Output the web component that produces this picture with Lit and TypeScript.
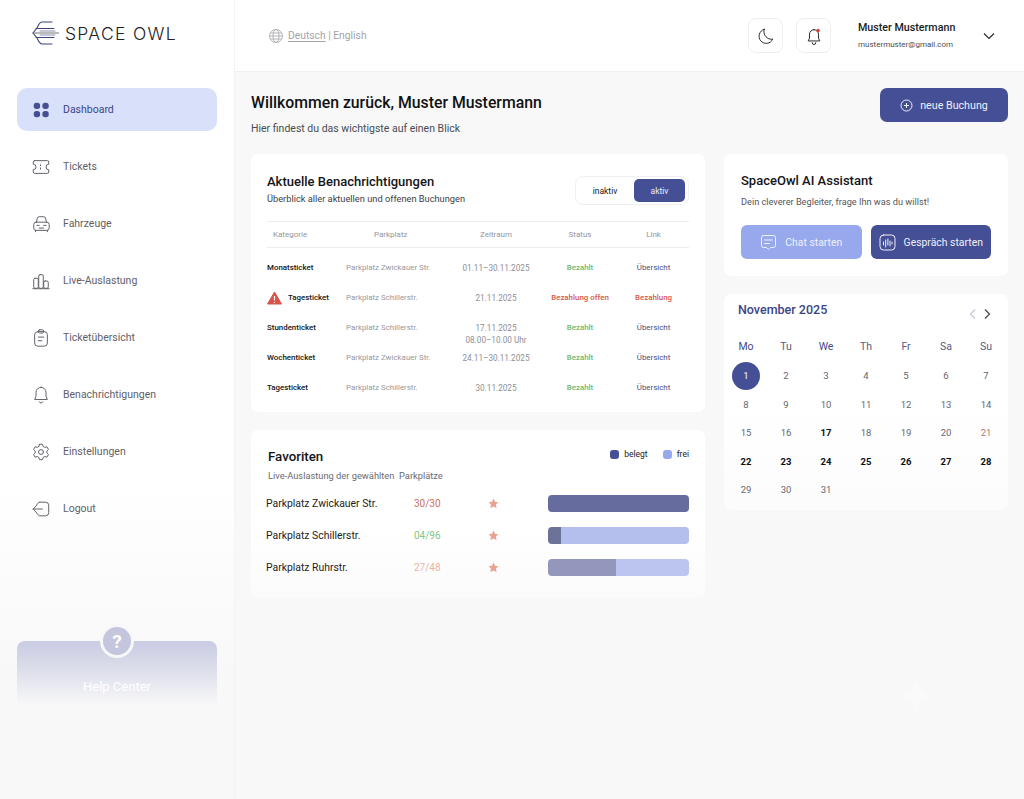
import { LitElement, html, css, svg } from "lit";
import { customElement } from "lit/decorators.js";

const navIcons: Record<string, unknown> = {
  dash: svg`<rect x="2" y="3" width="7" height="7" rx="3" fill="#454f95" stroke="none"/><rect x="11.500" y="3" width="7" height="7" rx="3" fill="#454f95" stroke="none"/><rect x="2" y="12" width="7" height="7" rx="3" fill="#454f95" stroke="none"/><rect x="11.500" y="12" width="7" height="7" rx="3" fill="#454f95" stroke="none"/>`,
  ticket: svg`<path d="M3 4h14a1.500 1.500 0 0 1 1.500 1.500V8a3 3 0 0 0 0 6v2.500A1.500 1.500 0 0 1 17 18H3a1.500 1.500 0 0 1-1.500-1.500V14a3 3 0 0 0 0-6V5.500A1.500 1.500 0 0 1 3 4z"/><path d="M9.500 8.500v1M9.500 12v1.500"/>`,
  car: svg`<path d="M5 9l1-4.500A2 2 0 0 1 8 3h5a2 2 0 0 1 2 1.500L16 9"/><rect x="2" y="9" width="17" height="9" rx="2.500"/><path d="M5.500 12.500h2.500M13 12.500h2.500M8 15.500h5M4 18v1.500M17 18v1.500"/>`,
  chart: svg`<rect x="2" y="8" width="5" height="11" rx="1.500"/><rect x="7.500" y="4" width="5" height="15" rx="1.500"/><rect x="13" y="11" width="5" height="8" rx="1.500"/><path d="M1 19.500h18"/>`,
  clip: svg`<rect x="3" y="4" width="14" height="16" rx="3.500"/><rect x="7" y="2" width="6" height="3.500" rx="1.500"/><path d="M7 10h6M7 14h4"/>`,
  bell: svg`<path d="M10 2.500a5.500 5.500 0 0 0-5.500 5.500v4.500L3 16h14l-1.500-3.500V8A5.500 5.500 0 0 0 10 2.500z"/><path d="M8 18.500a2.200 2.200 0 0 0 4 0"/>`,
  gear: svg`<path d="M8.300 2.500h3.400l.6 2.400 1.800 1 2.400-.7 1.700 3-1.800 1.700v2.100l1.800 1.700-1.700 3-2.400-.7-1.800 1-.6 2.400H8.300l-.6-2.400-1.800-1-2.400.7-1.700-3 1.800-1.700V9.900L1.800 8.200l1.700-3 2.400.7 1.800-1z"/><circle cx="10" cy="11" r="2.700"/>`,
  logout: svg`<path d="M8 3.500h7a3.500 3.500 0 0 1 3.500 3.500v8a3.500 3.500 0 0 1-3.500 3.500H8L5.500 16M5.500 6L8 3.500"/><path d="M1.500 11h10M1.500 11l4-4.500M1.500 11l4 4.500"/>`,
};

const nav = [
  ["dash", "Dashboard"],
  ["ticket", "Tickets"],
  ["car", "Fahrzeuge"],
  ["chart", "Live-Auslastung"],
  ["clip", "Ticketübersicht"],
  ["bell", "Benachrichtigungen"],
  ["gear", "Einstellungen"],
  ["logout", "Logout"],
];

const rows = [
  { k: "Monatsticket", p: "Parkplatz Zwickauer Str.", z: ["01.11–30.11.2025"], s: "Bezahlt", l: "Übersicht" },
  { k: "Tagesticket", p: "Parkplatz Schillerstr.", z: ["21.11.2025"], s: "Bezahlung offen", l: "Bezahlung", warn: true },
  { k: "Stundenticket", p: "Parkplatz Schillerstr.", z: ["17.11.2025", "08.00–10.00 Uhr"], s: "Bezahlt", l: "Übersicht" },
  { k: "Wochenticket", p: "Parkplatz Zwickauer Str.", z: ["24.11–30.11.2025"], s: "Bezahlt", l: "Übersicht" },
  { k: "Tagesticket", p: "Parkplatz Schillerstr.", z: ["30.11.2025"], s: "Bezahlt", l: "Übersicht" },
];

const favs = [
  { n: "Parkplatz Zwickauer Str.", c: "30/30", cls: "red", used: 100, a: "#666c9e", b: "#666c9e" },
  { n: "Parkplatz Schillerstr.", c: "04/96", cls: "green", used: 9, a: "#6d7299", b: "#b5bfee" },
  { n: "Parkplatz Ruhrstr.", c: "27/48", cls: "orange", used: 48, a: "#9297bb", b: "#bcc5ef" },
];

const boldDays = new Set([17, 22, 23, 24, 25, 26, 27, 28]);

@customElement("app-root")
export class AppRoot extends LitElement {
  static styles = css`
    :host {
      display: block;
      width: 1024px;
      height: 799px;
      overflow: hidden;
      font-family: "Roboto", "Liberation Sans", sans-serif;
      color: #111;
    }
    * { box-sizing: border-box; }
    .page {
      position: relative;
      display: grid;
      grid-template-columns: 235px 1fr;
      height: 799px;
      background: #f8f8f9;
    }
    .side {
      display: flex;
      flex-direction: column;
      padding: 0 17px;
      border-right: 1px solid #f3f3f5;
      background: linear-gradient(#ffffff 0, #ffffff 480px, #f8f8f9 680px);
    }
    .logo {
      display: flex;
      align-items: center;
      gap: 6px;
      height: 30px;
      margin: 18px 0 40px 15px;
    }
    .logo span {
      font-family: "Inter", sans-serif;
      font-weight: 300;
      font-size: 17.500px;
      letter-spacing: 1.300px;
      color: #222;
      white-space: nowrap;
    }
    .nav { display: flex; flex-direction: column; gap: 14px; }
    .item {
      display: flex;
      align-items: center;
      gap: 12px;
      height: 43px;
      padding-left: 14px;
      border-radius: 10px;
      font-size: 10.500px;
      color: #5f6067;
    }
    .item svg {
      width: 20px;
      height: 20px;
      fill: none;
      stroke: #63646b;
      stroke-width: 1.100;
      stroke-linecap: round;
      stroke-linejoin: round;
      flex: none;
    }
    .item.on { background: #d9e1fa; color: #3b4488; }
    .help {
      position: relative;
      margin-top: 111px;
      height: 64px;
      border-radius: 8px 8px 0 0;
      background: linear-gradient(#c9cce2 0, #dcdeea 45%, #f8f8f9 100%);
      display: flex;
      justify-content: center;
      align-items: flex-end;
      padding-bottom: 11px;
      color: #fff;
      font-size: 13px;
    }
    .qm {
      position: absolute;
      left: 83px;
      top: -17px;
      width: 34px;
      height: 34px;
      border-radius: 50%;
      background: #c3c6dd;
      border: 3px solid #f8f8fa;
      display: flex;
      align-items: center;
      justify-content: center;
      font-size: 19px;
      font-weight: 700;
      color: #fff;
    }
    .main { display: flex; flex-direction: column; min-width: 0; }
    .top {
      display: flex;
      align-items: center;
      height: 72px;
      background: #fff;
      border-bottom: 1px solid #f1f1f3;
      padding: 0 28px 0 33px;
    }
    .lang { display: flex; align-items: center; gap: 4px; font-size: 10.300px; color: #a3a4aa; flex: 1; }
    .lang svg { width: 16px; height: 16px; fill: none; stroke: #b2b3b9; stroke-width: 1; }
    .lang u { text-underline-offset: 2px; }
    .tool {
      width: 35px;
      height: 35px;
      border: 1px solid #efeff2;
      border-radius: 8px;
      display: flex;
      align-items: center;
      justify-content: center;
      margin-right: 13px;
      background: #fff;
    }
    .tool svg { width: 18px; height: 18px; fill: none; stroke: #2a2a2e; stroke-width: 1.100; stroke-linecap: round; stroke-linejoin: round; }
    .user { margin-left: 14px; width: 124px; }
    .user b { display: block; font-weight: 500; font-size: 10.700px; line-height: 15px; color: #1a1a1d; }
    .user small { display: block; font-size: 8px; line-height: 12px; margin-top: 4px; color: #4c4d52; }
    .chev { width: 14px; height: 14px; fill: none; stroke: #2a2a2e; stroke-width: 1.200; }
    .content { padding: 16px 16px 0; display: flex; flex-direction: column; }
    .head { display: flex; justify-content: space-between; align-items: flex-start; height: 66px; }
    h1 { margin: 0; font-size: 15.800px; font-weight: 500; line-height: 29px; color: #111; }
    .head p { margin: 4px 0 0; font-size: 10.500px; line-height: 16px; color: #4a4b50; }
    .new {
      width: 128px;
      height: 34px;
      border-radius: 7px;
      background: #454f95;
      color: #eef0fa;
      font-size: 10.700px;
      display: flex;
      align-items: center;
      justify-content: center;
      gap: 7px;
    }
    .new svg { width: 13px; height: 13px; fill: none; stroke: #eef0fa; stroke-width: 1; }
    .cols { display: grid; grid-template-columns: 454px 284px; gap: 19px; }
    .col { display: flex; flex-direction: column; gap: 18px; }
    .card { background: #fff; border-radius: 7px; }
    .notif { height: 258px; padding: 18px 16px 0; }
    .nh { display: flex; justify-content: space-between; align-items: flex-start; height: 49px; }
    h2 { margin: 0; font-size: 13px; font-weight: 500; line-height: 20px; color: #141416; }
    .sub { margin: 0; font-size: 9.250px; line-height: 13px; color: #3d3e43; }
    .toggle {
      width: 114px;
      height: 29px;
      margin-top: 4px;
      border: 1px solid #eeeff3;
      border-radius: 8px;
      padding: 2px 2px 2px 0;
      display: grid;
      grid-template-columns: 58px 51px;
      font-size: 8.500px;
      color: #222;
    }
    .toggle span { display: flex; align-items: center; justify-content: center; border-radius: 5px; }
    .toggle .act { background: #454f95; color: #e9ebf8; }
    .tr { display: grid; grid-template-columns: 79px 104px 92px 76px 71px; }
    .th {
      height: 27px;
      align-items: center;
      border-top: 1px solid #ececef;
      border-bottom: 1px solid #ececef;
      font-size: 8px;
      color: #94959b;
      margin-bottom: 5px;
    }
    .th span:nth-child(1) { padding-left: 6px; }
    .th span:nth-child(2) { padding-left: 28px; }
    .c { text-align: center; }
    .td { height: 30px; font-size: 7.900px; line-height: 12px; padding-top: 9px; }
    .td .k { font-weight: 500; color: #151517; white-space: nowrap; display: flex; align-items: center; align-self: start; height: 12px; }
    .td .k svg { width: 15px; height: 14px; margin-right: 6px; flex: none; margin-top: -1px; }
    .td .p { color: #97989e; white-space: nowrap; }
    .td .z { color: #8f9096; white-space: nowrap; font-size: 8.200px; }
    .ok { color: #6fb86d; font-weight: 500; }
    .bad { color: #d8584b; font-weight: 500; white-space: nowrap; }
    .lk { color: #494d78; }
    .fav { height: 168px; padding: 17px 16px 0 15px; background: linear-gradient(#fff 0, #fff 60%, #fbfbfc 100%); }
    .fh { display: flex; justify-content: space-between; height: 40px; }
    .fav h2 { padding-left: 2px; font-size: 13.300px; }
    .fav .sub { padding-left: 2px; color: #6a6b71; font-size: 9.300px; margin-top: 2px; }
    .legend { display: flex; gap: 15px; font-size: 8.500px; color: #222; height: 14px; margin-top: 0; align-items: center; }
    .legend span { display: flex; align-items: center; gap: 5px; }
    .legend i { width: 9px; height: 9px; border-radius: 3px; display: block; }
    .frow {
      display: grid;
      grid-template-columns: 148px 66px 68px 141px;
      align-items: center;
      height: 32px;
      font-size: 10.400px;
      color: #1d1d20;
    }
    .frow .cnt { font-size: 10px; }
    .red { color: #c9735f; }
    .green { color: #84c47f; }
    .orange { color: #edb49f; }
    .frow svg { width: 11px; height: 11px; fill: #e9a392; margin-left: 8px; }
    .bar { display: flex; height: 17px; border-radius: 4px; overflow: hidden; width: 141px; }
    .ai { height: 122px; padding: 17px 17px 0; }
    .ai h2 { font-size: 13px; }
    .ai .sub { margin-top: 4px; color: #55565b; font-size: 9.200px; }
    .ai .btns { display: flex; gap: 9px; margin-top: 17px; }
    .btn {
      width: 121px;
      height: 34px;
      border-radius: 6px;
      display: flex;
      align-items: center;
      justify-content: center;
      gap: 8px;
      font-size: 10.400px;
      color: #eef0fb;
    }
    .btn svg { width: 17px; height: 17px; fill: none; stroke: #eef0fb; stroke-width: 1; stroke-linecap: round; stroke-linejoin: round; flex: none; }
    .b1 { background: #97a8ed; }
    .b2 { background: #454f95; }
    .cal { height: 216px; padding: 7px 2px 0; background: linear-gradient(#fff 0, #fff 50%, #fcfcfd 100%); }
    .ch { display: flex; justify-content: space-between; align-items: flex-start; height: 31px; padding: 0 14px 0 12px; }
    .ch b { font-weight: 500; font-size: 12.500px; line-height: 18px; color: #3b4585; }
    .arrows { display: flex; gap: 4px; margin-top: 7px; }
    .arrows svg { width: 10px; height: 12px; fill: none; stroke-width: 1.200; }
    .grid { display: grid; grid-template-columns: repeat(7, 40px); grid-template-rows: 29.500px; grid-auto-rows: 28.500px; font-size: 9.500px; color: #66676c; }
    .grid span { display: flex; align-items: center; justify-content: center; }
    .wd { font-size: 10.500px; color: #565a85; }
    .wd.blue { color: #3f4a8e; }
    .grid .b { font-weight: 700; color: #111; }
    .grid .hol { color: #b0796f; }
    .grid .sel { position: relative; color: #fff; z-index: 0; }
    .grid .sel::before {
      content: "";
      position: absolute;
      left: 6px;
      top: 0;
      width: 28px;
      height: 28px;
      border-radius: 50%;
      background: #454f95;
      z-index: -1;
    }
    .spark { position: absolute; left: 897px; top: 676px; width: 38px; height: 38px; fill: #fafafb; }
  `;

  render() {
    const cnt = 31;
    return html`<div class="page">
      <aside class="side">
        <div class="logo">
          <svg width="27" height="26" viewBox="0 0 27 26" fill="none" stroke-width="1.100" stroke-linecap="round">
            <path d="M20 2H10C7.500 2 6.500 5 5 8L1 13l4 5c1.500 3 2.500 6 5 6h10" stroke="#39437f"/>
            <path d="M1 13h26" stroke="#777"/>
            <path d="M4 8.500h18M4 17.500h18" stroke="#39437f"/>
            <path d="M8 11h15M8 15h15" stroke="#8b90b3"/>
          </svg>
          <span>SPACE OWL</span>
        </div>
        <nav class="nav">
          ${nav.map(
            ([ic, label], i) => html`<div class="item ${i === 0 ? "on" : ""}">
              <svg viewBox="0 0 20 22">${navIcons[ic]}</svg>${label}
            </div>`
          )}
        </nav>
        <div class="help"><div class="qm">?</div>Help Center</div>
      </aside>
      <div class="main">
        <header class="top">
          <div class="lang">
            <svg viewBox="0 0 16 16"><circle cx="8" cy="8" r="6.500"/><ellipse cx="8" cy="8" rx="3" ry="6.500"/><path d="M1.500 8h13M2.500 5h11M2.500 11h11"/></svg>
            <span><u>Deutsch</u> | English</span>
          </div>
          <div class="tool"><svg viewBox="0 0 20 20"><path d="M8 2.500a8 8 0 1 0 9.500 11A8.500 8.500 0 0 1 8 2.500z"/></svg></div>
          <div class="tool">
            <svg viewBox="0 0 20 20">
              <path d="M10 3a5 5 0 0 0-5 5v4.500L3.500 15.500h13L15 12.500V8a5 5 0 0 0-5-5z"/>
              <path d="M8 17.500a2 2 0 0 0 4 0"/>
              <circle cx="14.500" cy="4" r="2" fill="#d8453c" stroke="none"/>
            </svg>
          </div>
          <div class="user"><b>Muster Mustermann</b><small>mustermuster@gmail.com</small></div>
          <svg class="chev" viewBox="0 0 14 14"><path d="M2 4.500l5 5 5-5"/></svg>
        </header>
        <div class="content">
          <div class="head">
            <div>
              <h1>Willkommen zurück, Muster Mustermann</h1>
              <p>Hier findest du das wichtigste auf einen Blick</p>
            </div>
            <div class="new">
              <svg viewBox="0 0 13 13"><circle cx="6.500" cy="6.500" r="5.500"/><path d="M4 6.500h5M6.500 4v5"/></svg>neue Buchung
            </div>
          </div>
          <div class="cols">
            <div class="col">
              <section class="card notif">
                <div class="nh">
                  <div>
                    <h2>Aktuelle Benachrichtigungen</h2>
                    <p class="sub">Überblick aller aktuellen und offenen Buchungen</p>
                  </div>
                  <div class="toggle"><span>inaktiv</span><span class="act">aktiv</span></div>
                </div>
                <div class="tr th">
                  <span>Kategorie</span><span>Parkplatz</span><span class="c">Zeitraum</span><span class="c">Status</span><span class="c">Link</span>
                </div>
                ${rows.map(
                  (r) => html`<div class="tr td">
                    <div class="k">
                      ${r.warn
                        ? html`<svg viewBox="0 0 15 14"><path d="M7.500 1L14.500 13H.5z" fill="#d9534a" stroke="#d9534a" stroke-linejoin="round"/><path d="M7.500 5v4.500M7.500 11v1" stroke="#fff" stroke-width="1.200"/></svg>`
                        : ""}${r.k}
                    </div>
                    <div class="p">${r.p}</div>
                    <div class="z c">${r.z.map((l) => html`<div>${l}</div>`)}</div>
                    <div class="c ${r.warn ? "bad" : "ok"}">${r.s}</div>
                    <div class="c ${r.warn ? "bad" : "lk"}">${r.l}</div>
                  </div>`
                )}
              </section>
              <section class="card fav">
                <div class="fh">
                  <div>
                    <h2>Favoriten</h2>
                    <p class="sub">Live-Auslastung der gewählten&nbsp; Parkplätze</p>
                  </div>
                  <div class="legend">
                    <span><i style="background:#454f95"></i>belegt</span>
                    <span><i style="background:#97a8ed"></i>frei</span>
                  </div>
                </div>
                ${favs.map(
                  (f) => html`<div class="frow">
                    <span>${f.n}</span>
                    <span class="cnt ${f.cls}">${f.c}</span>
                    <svg viewBox="0 0 20 20"><path d="M10 1l2.800 6 6.200.7-4.600 4.300 1.300 6.500L10 15.300 4.300 18.500l1.300-6.500L1 7.700 7.200 7z"/></svg>
                    <div class="bar">
                      <div style="width:${f.used}%;background:${f.a}"></div>
                      <div style="flex:1;background:${f.b}"></div>
                    </div>
                  </div>`
                )}
              </section>
            </div>
            <div class="col">
              <section class="card ai">
                <h2>SpaceOwl AI Assistant</h2>
                <p class="sub">Dein cleverer Begleiter, frage Ihn was du willst!</p>
                <div class="btns">
                  <div class="btn b1">
                    <svg viewBox="0 0 17 17"><path d="M3.500 1.500h10a2 2 0 0 1 2 2v8a2 2 0 0 1-2 2h-3l-2 2-2-2h-3a2 2 0 0 1-2-2v-8a2 2 0 0 1 2-2z"/><path d="M4.500 6h8M4.500 9.500h5"/></svg>Chat starten
                  </div>
                  <div class="btn b2">
                    <svg viewBox="0 0 17 17"><rect x="1" y="1" width="15" height="15" rx="3.500"/><path d="M4.500 8v3M6.700 6v7M8.900 5v6M11 7v5M13 8v2"/></svg>Gespräch starten
                  </div>
                </div>
              </section>
              <section class="card cal">
                <div class="ch">
                  <b>November 2025</b>
                  <div class="arrows">
                    <svg viewBox="0 0 10 12" stroke="#c3c8dc"><path d="M7 1.500L2.500 6 7 10.500"/></svg>
                    <svg viewBox="0 0 10 12" stroke="#444"><path d="M3 1.500L7.500 6 3 10.500"/></svg>
                  </div>
                </div>
                <div class="grid">
                  ${["Mo", "Tu", "We", "Th", "Fr", "Sa", "Su"].map(
                    (d, i) => html`<span class="wd ${i % 2 === 0 && i < 3 ? "blue" : ""}">${d}</span>`
                  )}
                  ${Array.from({ length: cnt }, (_, i) => i + 1).map(
                    (d) => html`<span class="${d === 1 ? "sel" : ""} ${boldDays.has(d) ? "b" : ""} ${d === 21 ? "hol" : ""}">${d}</span>`
                  )}
                </div>
              </section>
            </div>
          </div>
        </div>
      </div>
      <svg class="spark" viewBox="0 0 38 38"><path d="M19 0c2 12 7 17 19 19-12 2-17 7-19 19-2-12-7-17-19-19 12-2 17-7 19-19z"/></svg>
    </div>`;
  }
}
